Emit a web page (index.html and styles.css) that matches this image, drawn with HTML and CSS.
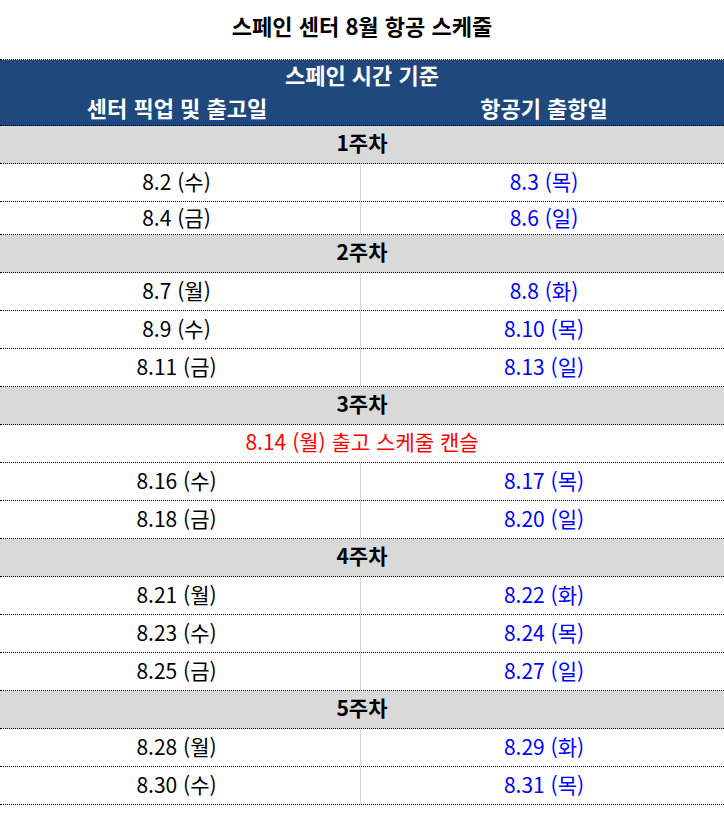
FILE: index.html
```html
<!DOCTYPE html>
<html lang="ko">
<head>
<meta charset="utf-8">
<title>스페인 센터 8월 항공 스케줄</title>
<link rel="stylesheet" href="styles.css">
</head>
<body>
<h1 class="title">스페인 센터 8월 항공 스케줄</h1>
<div class="sheet">
  <div class="head">
    <div class="head-top">스페인 시간 기준</div>
    <div class="head-cols">
      <div class="hc left">센터 픽업 및 출고일</div>
      <div class="hc right">항공기 출항일</div>
    </div>
  </div>

  <div class="week">1주차</div>
  <div class="row"><div class="c left">8.2 (수)</div><div class="c right">8.3 (목)</div></div>
  <div class="row short"><div class="c left">8.4 (금)</div><div class="c right">8.6 (일)</div></div>

  <div class="week">2주차</div>
  <div class="row"><div class="c left">8.7 (월)</div><div class="c right">8.8 (화)</div></div>
  <div class="row"><div class="c left">8.9 (수)</div><div class="c right">8.10 (목)</div></div>
  <div class="row"><div class="c left">8.11 (금)</div><div class="c right">8.13 (일)</div></div>

  <div class="week">3주차</div>
  <div class="notice">8.14 (월) 출고 스케줄 캔슬</div>
  <div class="row"><div class="c left">8.16 (수)</div><div class="c right">8.17 (목)</div></div>
  <div class="row"><div class="c left">8.18 (금)</div><div class="c right">8.20 (일)</div></div>

  <div class="week">4주차</div>
  <div class="row"><div class="c left">8.21 (월)</div><div class="c right">8.22 (화)</div></div>
  <div class="row"><div class="c left">8.23 (수)</div><div class="c right">8.24 (목)</div></div>
  <div class="row"><div class="c left">8.25 (금)</div><div class="c right">8.27 (일)</div></div>

  <div class="week">5주차</div>
  <div class="row"><div class="c left">8.28 (월)</div><div class="c right">8.29 (화)</div></div>
  <div class="row"><div class="c left">8.30 (수)</div><div class="c right">8.31 (목)</div></div>
</div>
</body>
</html>
```

FILE: styles.css
```css
html, body {
  margin: 0;
  padding: 0;
  background: #ffffff;
}

body {
  font-family: "Noto Sans CJK KR", "Noto Sans", sans-serif;
  font-size: 21px;
  color: #000000;
}

.title {
  margin: 0;
  height: 59px;
  line-height: 50px;
  font-size: 22px;
  font-weight: bold;
  text-align: center;
}

.sheet {
  border-top: 1px dotted #000000;
}

.head {
  background: #1f497d;
  color: #ffffff;
  font-weight: bold;
  font-size: 22px;
  height: 65px;
  border-bottom: 1px dotted #000000;
}

.head-top {
  height: 30px;
  line-height: 29px;
  text-align: center;
}

.head-cols {
  display: grid;
  grid-template-columns: 361px 1fr;
  height: 35px;
}

.hc {
  line-height: 34px;
  text-align: center;
}

.week {
  background: #d9d9d9;
  font-weight: bold;
  height: 37px;
  line-height: 33px;
  text-align: center;
  border-bottom: 1px dotted #000000;
}

.notice {
  color: #ff0000;
  height: 37px;
  line-height: 33px;
  text-align: center;
  border-bottom: 1px dotted #000000;
}

.row {
  display: grid;
  grid-template-columns: 361px 1fr;
  height: 37px;
  border-bottom: 1px dotted #000000;
}

.row.short {
  height: 32px;
}

.c {
  display: flex;
  align-items: center;
  justify-content: center;
  padding-bottom: 4px;
}

.left {
  padding-right: 7px;
}

.right {
  padding-left: 3px;
}

.c.left {
  border-right: 1px solid #d4d4d4;
}

.c.right {
  color: #0000ff;
}
```
